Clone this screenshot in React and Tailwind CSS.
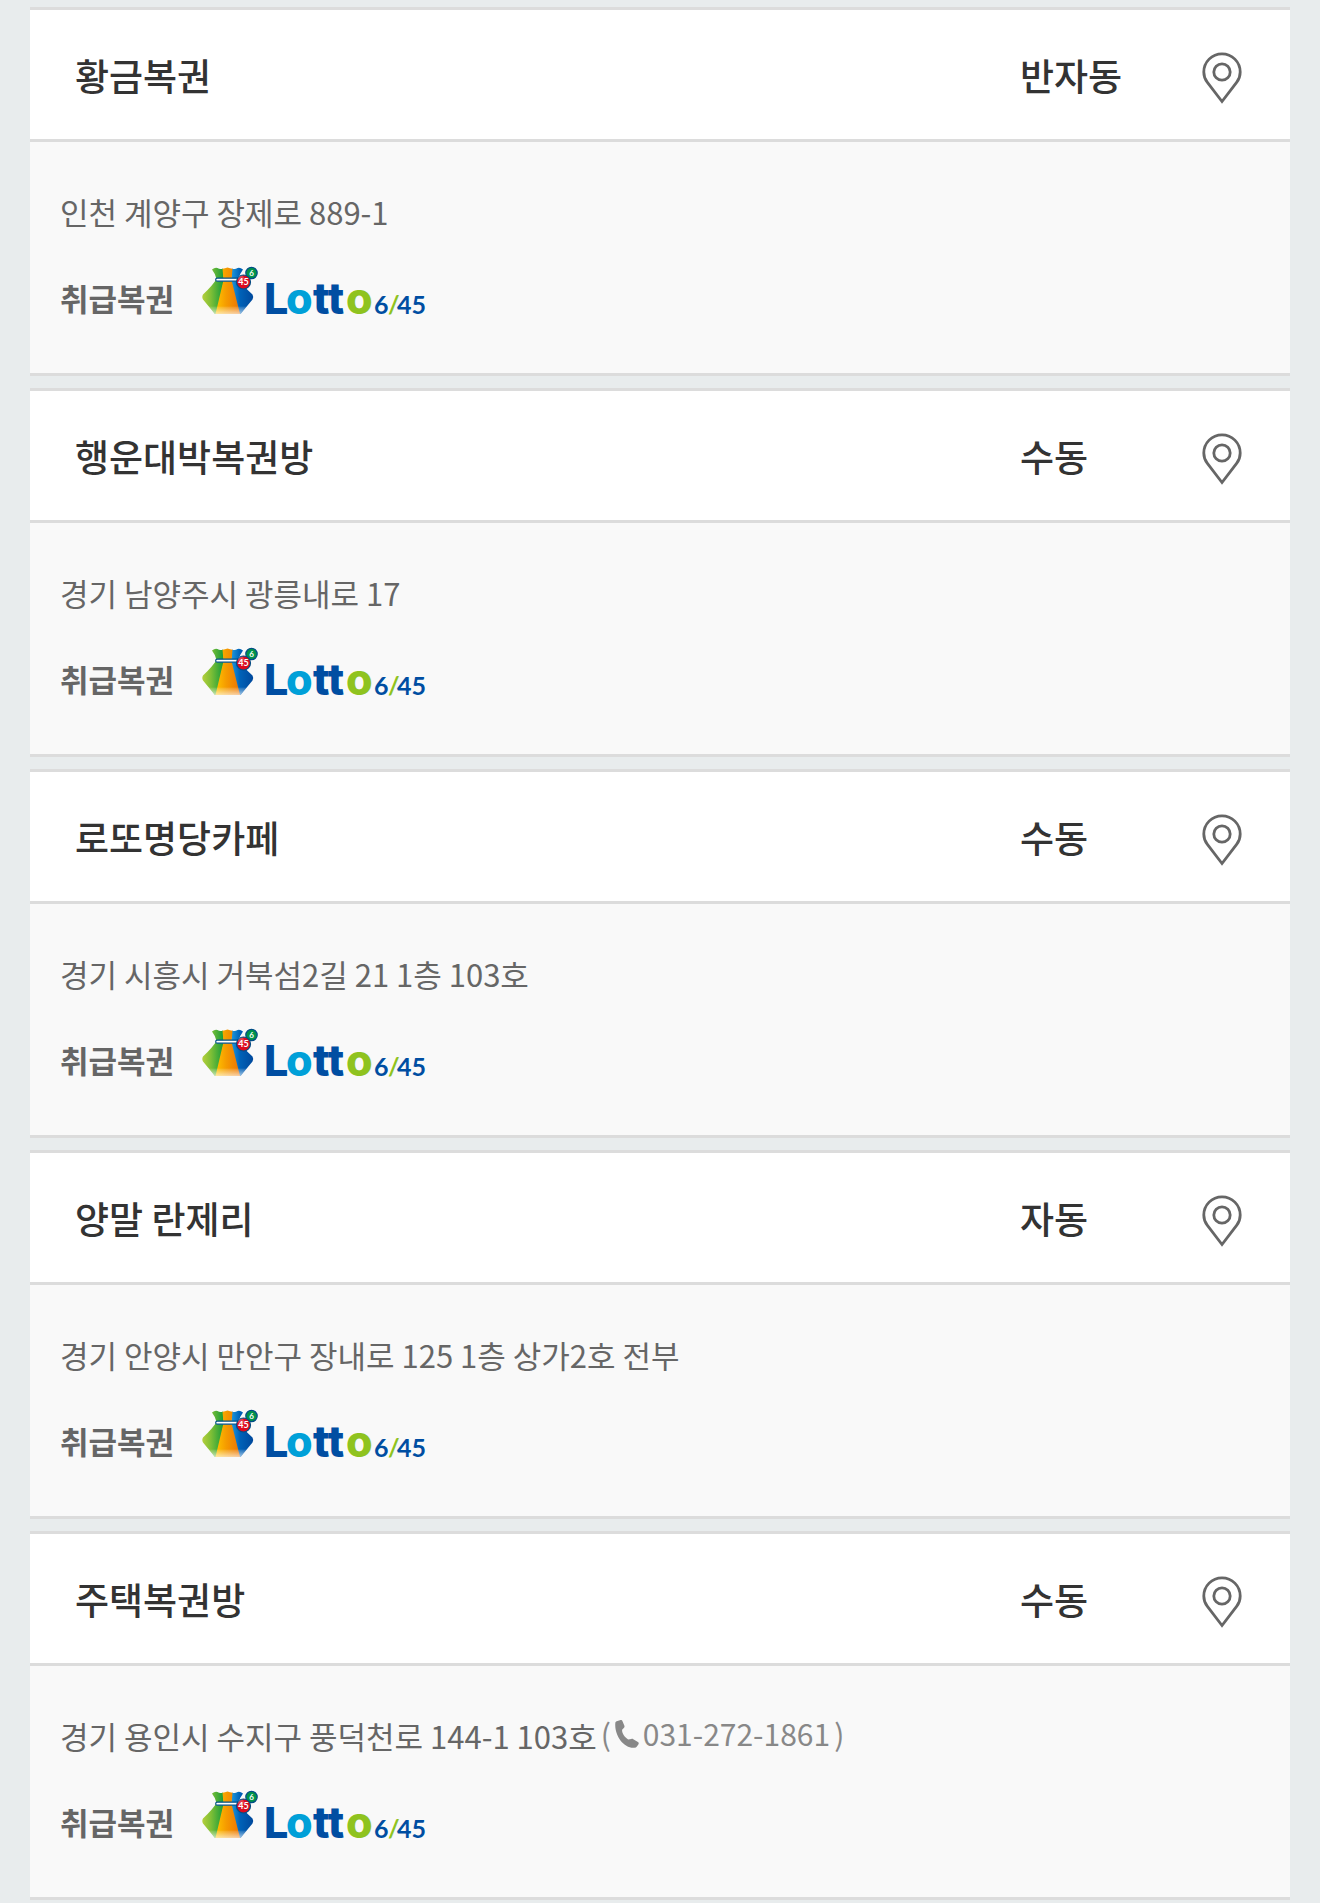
const stores = [
  { name: '황금복권', type: '반자동', address: '인천 계양구 장제로 889-1' },
  { name: '행운대박복권방', type: '수동', address: '경기 남양주시 광릉내로 17' },
  { name: '로또명당카페', type: '수동', address: '경기 시흥시 거북섬2길 21 1층 103호' },
  { name: '양말 란제리', type: '자동', address: '경기 안양시 만안구 장내로 125 1층 상가2호 전부' },
  { name: '주택복권방', type: '수동', address: '경기 용인시 수지구 풍덕천로 144-1 103호', phone: '031-272-1861' },
];

function PinIcon() {
  return (
    <svg viewBox="0 0 40 52" className="h-[52px] w-10" fill="none" stroke="#666" strokeWidth="2.8" aria-hidden="true">
      <path d="M20 49.5 L5.2 30.2 C2.8 27 1.8 24 1.8 20 A18.2 18.2 0 0 1 38.2 20 C38.2 24 37.2 27 34.8 30.2 Z" />
      <circle cx="20" cy="20" r="8.2" />
    </svg>
  );
}

function PhoneIcon() {
  return (
    <svg viewBox="0 0 24 28" className="h-7 w-6" fill="#888" aria-hidden="true">
      <path d="M0.3 3.2 C0.2 2.2 0.8 1.6 1.7 1.2 L5.6 0.1 C6.6 -0.1 7.2 0.3 7.5 1.2 L9.4 5.7 C9.7 6.6 9.5 7.3 8.8 7.9 L7.1 9.8 C6.8 12.8 9.5 17.3 13.2 19.4 L16.3 18.9 C17 18.6 17.7 18.7 18.3 19.2 L22.9 22.1 C23.8 22.7 23.9 23.4 23.5 24.2 L21.9 26.4 C21.4 27.1 20.5 27.6 19.3 27.8 C8.8 28.6 -0.7 15.5 0.3 3.2 Z" />
    </svg>
  );
}

function LottoLogo({ id }) {
  return (
    <svg viewBox="0 0 232 64" className="h-16 w-[232px]" role="img" aria-label="Lotto 6/45">
      <defs>
        <linearGradient id={`${id}-green`} x1="0" x2="1">
          <stop offset="0" stopColor="#b5cf3c" />
          <stop offset="0.4" stopColor="#7fbf36" />
          <stop offset="1" stopColor="#129a3a" />
        </linearGradient>
        <linearGradient id={`${id}-orange`} x1="0" x2="1">
          <stop offset="0" stopColor="#ffc400" />
          <stop offset="0.45" stopColor="#f59a00" />
          <stop offset="1" stopColor="#ec7404" />
        </linearGradient>
        <linearGradient id={`${id}-blue`} x1="0" x2="1">
          <stop offset="0" stopColor="#1e9be0" />
          <stop offset="0.4" stopColor="#0062b8" />
          <stop offset="1" stopColor="#00489c" />
        </linearGradient>
        <linearGradient id={`${id}-shine`} x1="0" y1="0" x2="0" y2="1">
          <stop offset="0" stopColor="#fff" stopOpacity="0.1" />
          <stop offset="1" stopColor="#fff" stopOpacity="0.65" />
        </linearGradient>
      </defs>
      <path d="M10 3.5 Q13 1 15.5 2 Q18 3.8 21 2.5 L22 14 L15 48 H13 L1 33.5 Q-0.4 31 1 28.5 Q11 19 14.5 13 Q13.5 8 10 3.5 Z" fill={`url(#${id}-green)`} />
      <path d="M30 2.5 Q33 3.8 35.5 2 Q38 1 41 3.5 Q37.5 8 36.5 13 Q40 19 50.5 28.5 Q52 31 50.5 33.5 L38.5 48 H36 L29 14 Z" fill={`url(#${id}-blue)`} />
      <path d="M20.5 2.8 Q23 2.5 25.5 1.5 Q28 2.5 30.5 2.8 L29.5 14 L38 48 H13.5 L21.5 14 Z" fill={`url(#${id}-orange)`} />
      <path d="M6.8 40.5 H44.7 L38.5 48 H13 Z" fill={`url(#${id}-shine)`} />
      <rect x="13.7" y="12.2" width="24" height="3" rx="1.5" fill="#fff" stroke="#00528c" strokeWidth="1.2" />
      <circle cx="49.5" cy="7" r="5.7" fill="#00934a" stroke="#004d86" strokeWidth="1.2" />
      <circle cx="41.5" cy="16" r="7" fill="#dc0a1e" stroke="#004d86" strokeWidth="1.2" />
      <circle cx="39" cy="12.5" r="3" fill="#fff" opacity="0.2" />
      <g fill="#fff" textAnchor="middle" className="[font-family:Lato,sans-serif] font-bold">
        <text x="49.5" y="10" fontSize="8">6</text>
        <text x="41.5" y="19" fontSize="9">45</text>
      </g>
      <g fontSize="43" className="[font-family:Inter,sans-serif] font-extrabold">
        <text x="62" y="48" fill="#004ea2">L</text>
        <text x="84" y="48" fill="#00a0d8">o</text>
        <text x="111" y="48" fill="#004ea2">tt</text>
        <text x="144" y="48" fill="#8fc31f">o</text>
      </g>
      <g fontSize="25" className="[font-family:Lato,sans-serif] font-bold">
        <text x="172" y="48" fill="#004ea2">6</text>
        <text x="186" y="48" fill="#8fc31f">/</text>
        <text x="195" y="48" fill="#004ea2">45</text>
      </g>
    </svg>
  );
}

function StoreCard({ store, id }) {
  return (
    <li className="border-y-[3px] border-[#dcdcdc] bg-[#f9f9f9]">
      <div className="flex items-center border-b-[3px] border-[#dcdcdc] bg-white pr-12 pl-[45px]">
        <h2 className="flex-1 pt-[37px] pb-[35px] text-[37px] leading-[57px] font-medium text-[#333]">{store.name}</h2>
        <span className="w-[182px] pt-[37px] pb-[35px] text-[37px] leading-[57px] font-medium text-[#333]">{store.type}</span>
        <button type="button" aria-label={`${store.name} 위치 보기`} className="mt-1.5 cursor-pointer">
          <PinIcon />
        </button>
      </div>
      <div className="px-[30px] pt-[47px] pb-[43px]">
        <p className="flex items-start gap-1 text-[31px] leading-[45px] text-[#666]">
          {store.address}
          {store.phone && (
            <span className="flex items-center gap-1 text-[30px] leading-[41px] text-[#888]">
              (
              <a href={`tel:${store.phone}`} className="flex items-center gap-1">
                <PhoneIcon />
                {store.phone}
              </a>
              )
            </span>
          )}
        </p>
        <div className="mt-8 flex items-start gap-7">
          <strong className="text-[31px] leading-[64px] font-bold text-[#666]">취급복권</strong>
          <LottoLogo id={id} />
        </div>
      </div>
    </li>
  );
}

export default function App() {
  return (
    <main className="min-h-screen bg-[#e8eced] px-[30px] pt-[7px] font-['Noto_Sans_CJK_KR',sans-serif]">
      <ul className="flex flex-col gap-3">
        {stores.map((store, i) => (
          <StoreCard key={store.name} store={store} id={`lotto-${i}`} />
        ))}
      </ul>
    </main>
  );
}
